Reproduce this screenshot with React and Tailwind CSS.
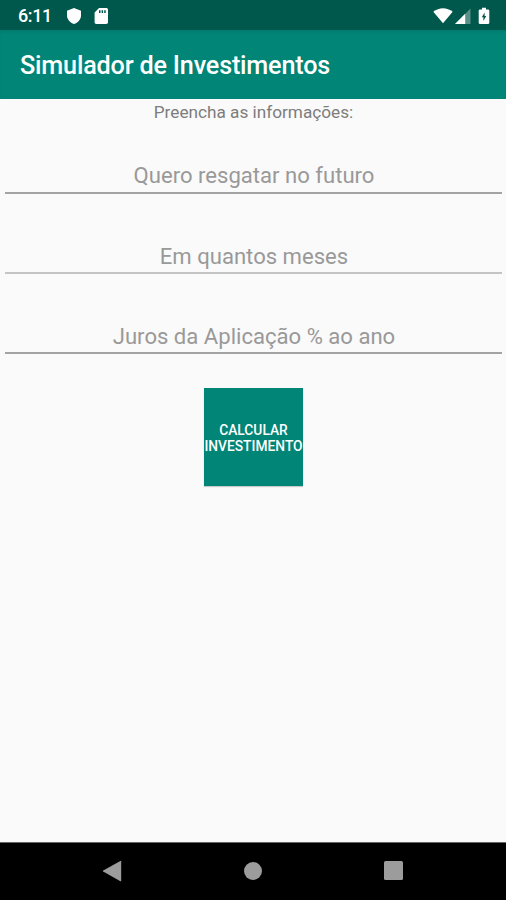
function StatusBar() {
  return (
    <header className="flex h-[30px] shrink-0 items-center bg-[#00574b] pl-[18px] text-white">
      <span className="mt-px w-[48px] text-[18px] leading-5 font-medium tracking-[-0.4px] whitespace-nowrap">6:11</span>
      <svg className="mt-px h-[18px] w-4" viewBox="0 0 16 18" fill="white">
        <path d="M8 1L15 3.7V8.5C15 12.5 12 15.7 8 17C4 15.7 1 12.5 1 8.5V3.7Z" />
      </svg>
      <svg className="mt-px ml-[12px] h-[18px] w-[14px]" viewBox="0 0 14 18" fill="white">
        <path fillRule="evenodd" d="M5 1H12.3C13.2 1 14 1.7 14 2.6V15.3C14 16.3 13.3 17 12.3 17H2.2C1.3 17 .6 16.3 .6 15.3V5.5ZM5 3.3V6H6.5V3.3ZM7.6 3.3V6H9.1V3.3ZM10.2 3.3V6H11.7V3.3Z" />
      </svg>
      <svg className="mt-px ml-auto h-[18px] w-5" viewBox="0 0 20 18" fill="white">
        <path d="M0.3 4.8C6-.1 14-.1 19.7 4.8L10 16.2Z" />
      </svg>
      <svg className="mt-px ml-[2px] h-[18px] w-4" viewBox="0 0 16 18" fill="white">
        <path opacity=".35" d="M15.5 1.5V17H0Z" />
        <path d="M10.2 6.8V17H0Z" />
      </svg>
      <svg className="mt-px mr-4 ml-[7px] h-[18px] w-3" viewBox="0 0 12 18">
        <path fill="white" d="M4 0.8H8V2.4H10Q11.3 2.4 11.3 3.7V15.8Q11.3 17.1 10 17.1H2Q.7 17.1 .7 15.8V3.7Q.7 2.4 2 2.4H4Z" />
        <path fill="#00574b" d="M6.6 5.6L3.8 10.3H5.4V14L8.2 9.1H6.6Z" />
      </svg>
    </header>
  );
}

function Field({ hint, fieldClass }) {
  return (
    <input
      type="text"
      aria-label={hint}
      placeholder={hint}
      className={`block h-9 w-full border-b-2 bg-transparent pl-px text-center text-[22.1px] text-black outline-none placeholder:text-[#999999] placeholder:opacity-100 ${fieldClass}`}
    />
  );
}

function NavigationBar() {
  return (
    <nav className="flex h-[58px] shrink-0 items-center justify-between border-t border-[#666666] bg-black pr-[103px] pb-[2px] pl-[102px]">
      <button aria-label="Voltar">
        <svg className="h-[22px] w-5" viewBox="0 0 20 22">
          <path fill="#9c9c9c" d="M1.2 10.4Q.3 11 1.2 11.6L18.4 21.2Q19.2 21.5 19.2 20.7V1.3Q19.2.5 18.4.9Z" />
        </svg>
      </button>
      <button aria-label="Início" className="size-[18px] rounded-full bg-[#9c9c9c]" />
      <button aria-label="Recentes" className="size-[19px] rounded-[1.5px] bg-[#9c9c9c]" />
    </nav>
  );
}

export default function App() {
  return (
    <div className="flex h-[900px] w-[506px] flex-col overflow-hidden bg-[#fafafa] font-['Roboto',sans-serif]">
      <StatusBar />
      <div className="flex h-[69px] shrink-0 items-center bg-[#008577] pl-5 shadow-[inset_0_3px_3px_-1px_rgba(0,0,0,0.08)]">
        <h1 className="mt-[3px] text-[25.2px] leading-8 font-medium tracking-[-0.18px] whitespace-nowrap text-white">Simulador de Investimentos</h1>
      </div>
      <main className="flex flex-1 flex-col items-center">
        <p className="mt-[2px] pl-px text-[17.2px] leading-[22px] text-[#7d7d7d]">Preencha as informações:</p>
        <div className="mt-[35px] flex w-full flex-col gap-11 pr-1 pl-[5px]">
          <Field hint="Quero resgatar no futuro" fieldClass="border-[#a3a3a3] pb-px" />
          <Field hint="Em quantos meses" fieldClass="border-[#c4c4c4] pt-px" />
          <Field hint="Juros da Aplicação % ao ano" fieldClass="border-[#a3a3a3] pt-px" />
        </div>
        <button className="mt-[34px] flex h-[98px] w-[99px] items-center justify-center bg-[#008577] pt-[2px] pl-px text-center text-[13.8px] leading-4 font-medium text-white shadow-[0_1px_1px_rgba(0,0,0,0.2)]">
          <span>CALCULAR<br />INVESTIMENTO</span>
        </button>
      </main>
      <NavigationBar />
    </div>
  );
}
